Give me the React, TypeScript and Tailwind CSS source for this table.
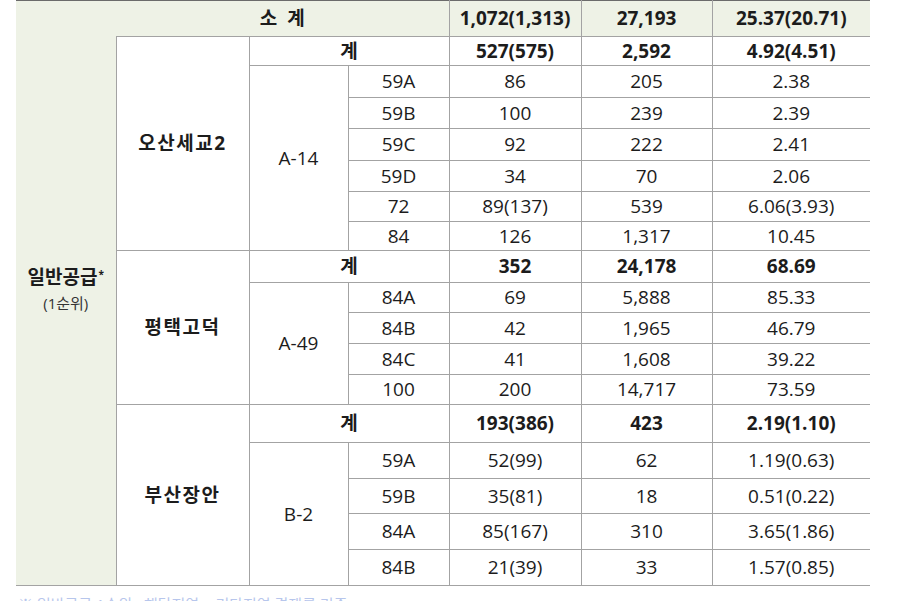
import React from "react";

const bd = "border-[#a3a3a3]";

type R = { k: string; a: string; b: string; c: string; h: string };

function Vals({ h, vals, bold }: { h: string; vals: string[]; bold?: boolean }) {
  return (
    <>
      {vals.map((v, i) => (
        <td
          key={i}
          className={`${h} border-b border-l ${bd} text-center p-0 ${bold ? "font-bold" : ""} ${
            i === vals.length - 1 ? "" : "border-r"
          }`}
        >
          {v}
        </td>
      ))}
    </>
  );
}

function group(name: string, code: string, total: string[], totalH: string, rows: R[]) {
  return [
    <tr key={name + "t"}>
      <td
        rowSpan={rows.length + 1}
        className={`border-l border-b border-r ${bd} text-center align-middle font-bold tracking-[1.5px] p-0`}
      >
        {name}
      </td>
      <td colSpan={2} className={`${totalH} border-b border-r ${bd} text-center font-bold p-0`}>
        계
      </td>
      <Vals h={totalH} vals={total} bold />
    </tr>,
    ...rows.map((r, i) => (
      <tr key={name + i}>
        {i === 0 && (
          <td rowSpan={rows.length} className={`border-b border-r ${bd} text-center align-middle p-0`}>
            {code}
          </td>
        )}
        <td className={`${r.h} border-b border-r ${bd} text-center p-0`}>{r.k}</td>
        <Vals h={r.h} vals={[r.a, r.b, r.c]} />
      </tr>
    )),
  ];
}

export default function App() {
  const ohsan: R[] = [
    { k: "59A", a: "86", b: "205", c: "2.38", h: "h-[32px]" },
    { k: "59B", a: "100", b: "239", c: "2.39", h: "h-[31px]" },
    { k: "59C", a: "92", b: "222", c: "2.41", h: "h-[32px]" },
    { k: "59D", a: "34", b: "70", c: "2.06", h: "h-[31px]" },
    { k: "72", a: "89(137)", b: "539", c: "6.06(3.93)", h: "h-[30px]" },
    { k: "84", a: "126", b: "1,317", c: "10.45", h: "h-[29px]" },
  ];
  const pyeong: R[] = [
    { k: "84A", a: "69", b: "5,888", c: "85.33", h: "h-[30px]" },
    { k: "84B", a: "42", b: "1,965", c: "46.79", h: "h-[31px]" },
    { k: "84C", a: "41", b: "1,608", c: "39.22", h: "h-[31px]" },
    { k: "100", a: "200", b: "14,717", c: "73.59", h: "h-[30px]" },
  ];
  const busan: R[] = [
    { k: "59A", a: "52(99)", b: "62", c: "1.19(0.63)", h: "h-[36px]" },
    { k: "59B", a: "35(81)", b: "18", c: "0.51(0.22)", h: "h-[35px]" },
    { k: "84A", a: "85(167)", b: "310", c: "3.65(1.86)", h: "h-[36px]" },
    { k: "84B", a: "21(39)", b: "33", c: "1.57(0.85)", h: "h-[36px]" },
  ];

  const head = `bg-[#eef2e6] border-t border-t-[#6b6b6b] border-b ${bd} text-center font-bold p-0`;

  return (
    <div className="w-[902px] h-[601px] overflow-hidden bg-white text-[19px] text-[#1c1c1c] font-['Open_Sans','Noto_Sans_CJK_KR',sans-serif]">
      <table className="ml-[16px] border-collapse table-fixed w-[854px] leading-none">
        <colgroup>
          <col className="w-[100px]" />
          <col className="w-[133px]" />
          <col className="w-[99px]" />
          <col className="w-[101px]" />
          <col className="w-[132px]" />
          <col className="w-[131px]" />
          <col className="w-[158px]" />
        </colgroup>
        <tbody>
          <tr>
            <td
              rowSpan={18}
              className="bg-[#eef2e6] border-t border-b border-t-[#6b6b6b] border-b-[#a3a3a3] text-center align-middle p-0"
            >
              <div className="flex flex-col items-center mb-[8px]">
                <div className="font-bold text-[19px] leading-[24px]">
                  일반공급<sup className="text-[10px] relative -top-[6px] ml-[1px]">*</sup>
                </div>
                <div className="text-[15px] leading-[20px] text-[#333] mt-[4px]">(1순위)</div>
              </div>
            </td>
            <td colSpan={3} className={`${head} h-[36px] border-r`}>
              소&nbsp;&nbsp;계
            </td>
            <td className={`${head} border-r`}>1,072(1,313)</td>
            <td className={`${head} border-r`}>27,193</td>
            <td className={head}>25.37(20.71)</td>
          </tr>
          {group("오산세교2", "A-14", ["527(575)", "2,592", "4.92(4.51)"], "h-[29px]", ohsan)}
          {group("평택고덕", "A-49", ["352", "24,178", "68.69"], "h-[32px]", pyeong)}
          {group("부산장안", "B-2", ["193(386)", "423", "2.19(1.10)"], "h-[38px]", busan)}
        </tbody>
      </table>
      <div className="ml-[18px] mt-[8px] text-[15px] leading-[20px] text-[#b7c6ec] whitespace-nowrap">
        ※ 일반공급 1순위 : 해당지역 + 기타지역 경쟁률 기준
      </div>
    </div>
  );
}
